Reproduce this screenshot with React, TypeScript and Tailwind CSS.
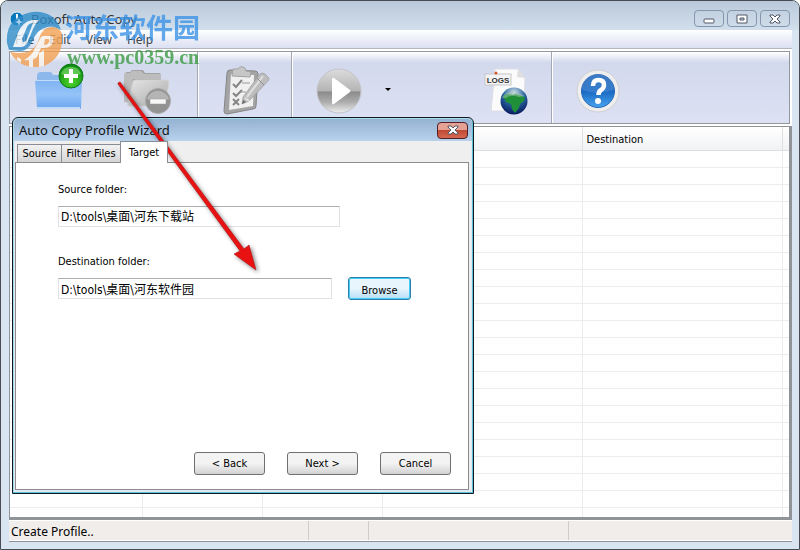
import React from 'react';

const COLUMNS = [132, 120, 120, 200, 200];
const ROWS = Array.from({ length: 22 }, (_, i) => i);

const FolderAddIcon = () => (
  <svg viewBox="0 0 48 48" className="size-12 overflow-visible" aria-hidden="true">
    <defs>
      <linearGradient id="folderBlue" x1="0" y1="0" x2="0" y2="1">
        <stop offset="0" stopColor="#7fb2f2" />
        <stop offset=".5" stopColor="#94c3f8" />
        <stop offset="1" stopColor="#6ba5ee" />
      </linearGradient>
      <radialGradient id="addGreen" cx=".5" cy=".75" r=".7">
        <stop offset="0" stopColor="#4fd62c" />
        <stop offset="1" stopColor="#0d8a12" />
      </radialGradient>
    </defs>
    <path d="M2 12q0-4 4-4h9q2 0 3 3h24q3 0 3 3v8H2z" fill="#8db8ec" />
    <path d="M0 16h47l-1 28q0 1-1 1H3q-1 0-1-1z" fill="url(#folderBlue)" />
    <path d="M0 16h47v1H0z" fill="#c0dcfb" />
    <path d="M2 43h43v2H2z" fill="#c3dcf6" />
    <circle cx="36" cy="12" r="12" fill="url(#addGreen)" stroke="#0b7a16" />
    <path d="M26 10a10.500 10.500 0 0 1 20 0q-10 5-20 0z" fill="#9be887" opacity=".5" />
    <path d="M34 5h4v5h5v4h-5v5h-4v-5h-5v-4h5z" fill="#fff" />
  </svg>
);

const FolderRemoveIcon = () => (
  <svg viewBox="0 0 48 48" className="size-12 overflow-visible" aria-hidden="true">
    <defs>
      <linearGradient id="folderGray" x1="0" y1="0" x2="1" y2="1">
        <stop offset="0" stopColor="#e6e6e6" />
        <stop offset="1" stopColor="#a9a9a9" />
      </linearGradient>
    </defs>
    <path d="M2 10q0-2 2-2h3l2-2h11l2 3h14q2 0 2 2v22H4q-2 0-2-2z" fill="#a3a3a3" />
    <path d="M1 38V11q0-2 2-2h4l2-2h9l3 3h17v5H10l-3 24z" fill="#bdbdbd" />
    <path d="M10 18q0-2 3-2h31q2 0 2 2l-4 24H5q-1 0 0-2z" fill="url(#folderGray)" stroke="#d3d3d3" />
    <circle cx="35" cy="37" r="12.500" fill="#929292" stroke="#aaa" />
    <path d="M24 35a11.500 11.500 0 0 1 22 0q-11 5-22 0z" fill="#b4b4b4" />
    <rect x="27" y="35" width="16" height="5" fill="#f6f6f6" stroke="#999" strokeWidth=".5" />
  </svg>
);

const ChecklistIcon = () => (
  <svg viewBox="0 0 48 48" className="size-12 overflow-visible" aria-hidden="true">
    <path d="M5 9q0-3 3-3l25 1q3 0 3 3l-2 32q0 3-3 3L5 50q-3 0-3-3z" fill="#a4a4a4" stroke="#868686" />
    <path d="M9 10l23 1-1 31-24 4z" fill="#f0f0f1" />
    <path d="M11 5h5q2-4 7-1l1 3 5 1-1 5-18-1z" fill="#c6c6c6" stroke="#a2a2a2" />
    <path d="M11 20l3 3 6-7M11 29l3 3 6-6M11 35l6 6m0-6-6 6" fill="none" stroke="#858585" strokeWidth="2" />
    <path d="M20 19h8M19 28h5" stroke="#9b9b9b" />
    <path d="M21 33l17-23q2-2 5 0l3 3q2 2 0 4L27 37l-7 3z" fill="#bdbdbd" stroke="#999" strokeWidth=".7" />
    <path d="M25 33l16-21M23 34l4 3" stroke="#e0e0e0" strokeWidth="2" />
    <path d="M35 14l7 7" stroke="#8e8e8e" />
    <path d="M21 36l-1 4 4-2z" fill="#6d6d6d" />
  </svg>
);

const PlayIcon = () => (
  <svg viewBox="0 0 48 48" className="size-12 overflow-visible" aria-hidden="true">
    <defs>
      <linearGradient id="playGray" x1="0" y1="0" x2="0" y2="1">
        <stop offset="0" stopColor="#dcdcdc" />
        <stop offset=".5" stopColor="#b4b4b4" />
        <stop offset=".52" stopColor="#8b8b8b" />
        <stop offset=".75" stopColor="#acacac" />
        <stop offset="1" stopColor="#efefef" />
      </linearGradient>
    </defs>
    <circle cx="23" cy="27" r="22" fill="url(#playGray)" stroke="#c3c3c8" />
    <path d="M16 15q0-2 2-1l16 12q1 1 0 2L18 40q-2 1-2-1z" fill="#fff" />
  </svg>
);

const LogsIcon = () => (
  <svg viewBox="0 0 48 48" className="size-12 overflow-visible" aria-hidden="true">
    <defs>
      <radialGradient id="globe" cx=".5" cy=".2" r=".8">
        <stop offset="0" stopColor="#cfe0e6" />
        <stop offset=".5" stopColor="#27649f" />
        <stop offset="1" stopColor="#08185e" />
      </radialGradient>
    </defs>
    <path d="M12 5h23l7 9-1 33H8z" fill="#fbfbfc" stroke="#dcdde2" />
    <path d="M35 5l7 9-8-1z" fill="#dedede" />
    <rect x="2" y="10" width="26" height="11" fill="#f4f4f4" stroke="#c5c5c5" />
    <circle cx="13" cy="9" r="1.500" fill="#d9562b" />
    <text x="15" y="19" textAnchor="middle" fontSize="8" fontWeight="700" fontFamily="Liberation Sans, sans-serif" fill="#333">LOGS</text>
    <circle cx="31" cy="37" r="13.500" fill="url(#globe)" />
    <path d="M20 32l4-2 6 1 3-1 5 2 4 1-1 4-4 3-1 4-4 5-3-4-1-5-5-2z" fill="#1f8f3a" />
    <path d="M19 34q6-11 23-2l-6 1q-8-3-13 1z" fill="#a4c9ac" opacity=".5" />
  </svg>
);

const HelpIcon = () => (
  <svg viewBox="0 0 48 48" className="size-12 overflow-visible" aria-hidden="true">
    <defs>
      <linearGradient id="helpBlue" x1="0" y1="0" x2="0" y2="1">
        <stop offset="0" stopColor="#2464b2" />
        <stop offset=".5" stopColor="#1768c1" />
        <stop offset="1" stopColor="#49a4ef" />
      </linearGradient>
    </defs>
    <circle cx="22" cy="27" r="21" fill="#eeeeef" stroke="#d0d0d3" />
    <circle cx="22" cy="27" r="16.500" fill="url(#helpBlue)" stroke="#2767b5" />
    <path d="M6 26a16 16 0 0 1 32 0q-16 6-32 0z" fill="#8dbdf0" opacity=".25" />
    <path d="M17 22q0-6 5.500-6t5.500 5q0 3-3 5-2.500 1.500-2.500 5" fill="none" stroke="#fff" strokeWidth="4.500" />
    <circle cx="22" cy="37" r="3" fill="#fff" />
  </svg>
);

const ToolButton: React.FC<{ label: string; children: React.ReactNode }> = ({ label, children }) => (
  <button type="button" aria-label={label} className="flex size-12 shrink-0">
    {children}
  </button>
);

const Separator = () => <div className="w-px shrink-0 self-stretch bg-[#a4a8b4] shadow-[1px_0_0_#fff]" />;

const CloseGlyph = () => (
  <svg viewBox="0 0 12 10" className="h-2.5 w-3" aria-hidden="true">
    <path d="M1 1h3l2 2 2-2h3v1L8 5l3 3v1H8L6 7 4 9H1V8l3-3-3-3z" fill="#fff" stroke="#525666" />
  </svg>
);

const CaptionButtons = () => (
  <div className="flex gap-[3px] pr-[9px]">
    <button type="button" aria-label="Minimize" className="flex h-[17px] w-[30px] items-center justify-center rounded-sm border border-[#8595ad]">
      <svg viewBox="0 0 12 10" className="h-2.5 w-3"><rect x="1" y="5" width="10" height="4" rx="1" fill="#fff" stroke="#525666" /></svg>
    </button>
    <button type="button" aria-label="Maximize" className="flex h-[17px] w-[30px] items-center justify-center rounded-sm border border-[#8595ad]">
      <svg viewBox="0 0 12 10" className="h-2.5 w-3"><path d="M1 1h10v8H1z" fill="#fff" stroke="#525666" /><path d="M4 4h4v2H4z" fill="#c7d3e1" stroke="#525666" /></svg>
    </button>
    <button type="button" aria-label="Close" className="flex h-[17px] w-[30px] items-center justify-center rounded-sm border border-[#8595ad]">
      <CloseGlyph />
    </button>
  </div>
);

const WizardButton: React.FC<{ children: React.ReactNode }> = ({ children }) => (
  <button type="button" className="h-[23px] w-[71px] rounded-[3px] border border-[#707070] bg-linear-to-b from-[#f3f3f3] from-50% to-[#d2d2d2] leading-4">
    {children}
  </button>
);

const ProfileWizard = () => (
  <section
    role="dialog"
    aria-labelledby="wizard-title"
    className="absolute top-[116px] left-[11px] flex h-[377px] w-[462px] flex-col rounded-t-md border border-[#111a22] bg-[#dfeaf5] shadow-[inset_-1px_-1px_0_#5cc3d6,inset_0_0_0_1px_#a5dbe6]"
  >
    <div className="mx-px mt-px flex h-[22px] items-center justify-between rounded-t bg-linear-to-b from-[#94b2d2] to-[#b8d2ec] pr-1 pl-[5px]">
      <h2 id="wizard-title" className="text-[13px] leading-5 text-[#111]">Auto Copy Profile Wizard</h2>
      <button type="button" aria-label="Close wizard" className="flex h-[17px] w-[31px] items-center justify-center rounded-sm border border-[#52202a] bg-linear-to-b from-[#e4a194] from-45% via-[#c04a34] via-50% to-[#d5694f]">
        <CloseGlyph />
      </button>
    </div>
    <div className="mx-0.5 mb-[3px] flex flex-1 flex-col bg-[#efefef] pr-0.5 font-['DejaVu_Sans_Condensed','Noto_Sans','Noto_Sans_CJK_SC',sans-serif] text-[11px]">
      <div role="tablist" className="flex h-[21px] items-end pl-0.5">
        <button type="button" role="tab" aria-selected="false" className="h-[18px] w-[45px] border border-b-0 border-[#898c95] bg-linear-to-b from-[#f2f2f2] to-[#d5d5d5] leading-[18px]">Source</button>
        <button type="button" role="tab" aria-selected="false" className="h-[18px] w-[58px] border-t border-[#898c95] bg-linear-to-b from-[#f2f2f2] to-[#d5d5d5] leading-[18px]">Filter Files</button>
        <button type="button" role="tab" aria-selected="true" className="z-10 -mb-px h-[22px] w-[48px] border border-b-0 border-[#898c95] bg-white leading-5">Target</button>
      </div>
      <div role="tabpanel" className="flex flex-1 flex-col border border-[#8c8c90] bg-white pt-4 pr-[17px] pb-[14px] pl-[42px]">
        <label htmlFor="source-folder" className="h-5 leading-[22px]">Source folder:</label>
        <input
          id="source-folder"
          defaultValue="D:\tools\桌面\河东下载站"
          className="mt-[7px] h-[21px] w-[282px] border border-[#dfe3e8] border-t-[#abadb3] bg-white px-0.5 pb-0.5 text-[12px]"
        />
        <label htmlFor="destination-folder" className="mt-6 h-5 leading-[22px]">Destination folder:</label>
        <div className="mt-[6px] flex items-center gap-4">
          <input
            id="destination-folder"
            defaultValue="D:\tools\桌面\河东软件园"
            className="h-[21px] w-[274px] border border-[#dfe3e8] border-t-[#abadb3] bg-white px-0.5 text-[12px]"
          />
          <button type="button" className="h-[23px] w-[63px] rounded-[3px] border border-[#2c7fa8] bg-linear-to-b from-[#e8f5fc] from-50% to-[#b4def5] pt-1 leading-4 shadow-[inset_0_0_0_1px_#46cdf5]">Browse</button>
        </div>
        <div className="mt-auto flex justify-end gap-[22px]">
          <WizardButton>&lt; Back</WizardButton>
          <WizardButton>Next &gt;</WizardButton>
          <WizardButton>Cancel</WizardButton>
        </div>
      </div>
    </div>
  </section>
);

const Watermark = () => (
  <div className="pointer-events-none absolute top-2 left-1 flex opacity-80">
    <svg viewBox="0 0 60 60" className="size-[60px]" aria-hidden="true">
      <path d="M2 34Q0 8 27 3q22-2 29 18-8-5-14-3-10 2-15 15-4 9-12 9L4 41z" fill="#2f8cc9" />
      <path d="M8 38l5-14q4-11 14-13h7q-4 4-6 9l-5 12q-2 6-8 6h-3l5-14-5 14z" fill="#eef5fb" />
      <path d="M17 30l5-12q2-4 6-4l-6 16q-1 3-4 3z" fill="#2f8cc9" />
      <path d="M14 9l1 3 3 1-3 1-1 3-1-3-3-1 3-1z" fill="#d8ebf8" />
      <path d="M34 30q3-12 14-12 8 1 9 8 2 22-18 31-23 5-34-14 20 4 27-8z" fill="#f3a052" />
      <path d="M38 27h7q4 0 3 5-1 7-9 7h-3l-4 9q-5 4-13 3 8-4 11-12l5-9q1-3 3-3z" fill="#fbf3ea" />
      <path d="M40 30h3q2 0 1 3-1 3-5 3z" fill="#f3a052" />
      <path d="M12 48l4 2v4l-4-3zM24 50l4-1v9h-4zM34 44l5-3v16l-5 1z" fill="#fbf3ea" />
    </svg>
    <div className="flex flex-col">
      <span className="h-9 font-['Noto_Sans_CJK_SC',sans-serif] text-[27px] leading-9 font-bold text-[#3b93e6]">河东软件园</span>
      <span className="pl-0.5 font-['Liberation_Serif',serif] text-[20px] leading-6 font-bold text-[#3a9a42]">www.pc0359.cn</span>
    </div>
  </div>
);

const PointerArrow = () => (
  <svg viewBox="0 0 150 200" className="pointer-events-none absolute top-[77px] left-[113px] h-[200px] w-[150px] drop-shadow-[2px_2px_2px_#0007]" aria-hidden="true">
    <path d="M4 5l2-1 124 167 5-4 7 25-22-16 6-3L4 6z" fill="#e81212" stroke="#b41010" strokeWidth=".6" />
  </svg>
);

export default function App() {
  return (
    <div className="relative flex h-screen min-h-[500px] flex-col overflow-hidden rounded-t-lg border border-[#484d55] bg-[#d8e4f0] font-['Noto_Sans','Noto_Sans_CJK_SC',sans-serif] text-black">
      <header className="flex h-[29px] shrink-0 items-center justify-between bg-linear-to-b from-[#bac9da] to-[#d2dfec] pt-1.5 pl-2">
        <div className="flex items-center gap-1.5">
          <svg viewBox="0 0 16 16" className="size-4" aria-hidden="true">
            <circle cx="8" cy="8" r="7" fill="#0878bc" stroke="#e4ecf4" />
            <path d="M8 3v6" stroke="#fff" strokeWidth="2" />
          </svg>
          <h1 className="text-[13px] leading-5 text-[#333]">Boxoft Auto Copy</h1>
        </div>
        <CaptionButtons />
      </header>

      <div className="mr-[7px] mb-[7px] ml-2 flex min-h-0 flex-1 flex-col border-b border-[#8d929a] bg-white">
        <nav className="flex h-[19px] shrink-0 items-center gap-[15px] border-b border-[#b3b6bd] bg-linear-to-b from-white to-[#dbe0f2] pt-0.5 pl-1.5 text-[12px] leading-4 text-[#444]">
          <button type="button">File</button>
          <button type="button">Edit</button>
          <button type="button">View</button>
          <button type="button">Help</button>
        </nav>

        <div className="mt-0.5 mr-0.5 flex h-[73px] shrink-0 items-center border border-[#94979d] bg-linear-to-b from-white via-[#d3d9ed] via-15% to-[#dce1f3]">
          <div className="flex gap-10 pr-[26px] pl-[25px]">
            <ToolButton label="Create profile"><FolderAddIcon /></ToolButton>
            <ToolButton label="Delete profile"><FolderRemoveIcon /></ToolButton>
          </div>
          <Separator />
          <div className="pr-[21px] pl-6">
            <ToolButton label="Edit profile"><ChecklistIcon /></ToolButton>
          </div>
          <Separator />
          <div className="flex items-center pr-5 pl-6">
            <ToolButton label="Run"><PlayIcon /></ToolButton>
            <button type="button" aria-label="Run options" className="mr-[87px] ml-4 flex h-12 w-4 items-center justify-center pt-1">
              <svg viewBox="0 0 6 3" className="h-[3px] w-1.5"><path d="M0 0h6L3 3z" /></svg>
            </button>
            <ToolButton label="View logs"><LogsIcon /></ToolButton>
          </div>
          <Separator />
          <div className="pl-6">
            <ToolButton label="Help"><HelpIcon /></ToolButton>
          </div>
        </div>

        <div className="mt-0.5 flex min-h-0 flex-1 flex-col overflow-hidden border-t border-r-[3px] border-b-[3px] border-l border-[#909397] bg-white">
          <table className="w-full table-fixed border-collapse text-left font-['DejaVu_Sans_Condensed','Noto_Sans',sans-serif] text-[11px]">
            <colgroup>
              {COLUMNS.map((width, i) => (
                <col key={i} style={{ width }} />
              ))}
              <col />
            </colgroup>
            <thead>
              <tr className="h-[23px] bg-linear-to-b from-white to-[#f1f2f4]">
                {COLUMNS.map((_, i) => (
                  <th key={i} className="border-r border-b border-[#dedfe1] pt-1 pl-1 leading-4 font-normal">
                    {i === 4 ? 'Destination' : ''}
                  </th>
                ))}
                <th className="border-b border-[#dedfe1]" />
              </tr>
            </thead>
            <tbody>
              {ROWS.map((row) => (
                <tr key={row} className="h-[17px]">
                  {COLUMNS.map((_, i) => (
                    <td key={i} className="border-r border-b border-[#ececec]" />
                  ))}
                  <td className="border-b border-[#ececec]" />
                </tr>
              ))}
            </tbody>
          </table>
        </div>

        <footer className="mt-px mb-px flex h-[19px] shrink-0 bg-[#f0edeb] text-[12px] leading-[22px]">
          <div className="w-[300px] border-r border-[#cfcccb] pl-0.5">Create Profile..</div>
          <div className="w-[60px] border-r border-[#cfcccb]" />
          <div className="w-[200px] border-r border-[#cfcccb]" />
          <div className="flex-1" />
        </footer>
      </div>

      <ProfileWizard />
      <Watermark />
      <PointerArrow />
    </div>
  );
}
